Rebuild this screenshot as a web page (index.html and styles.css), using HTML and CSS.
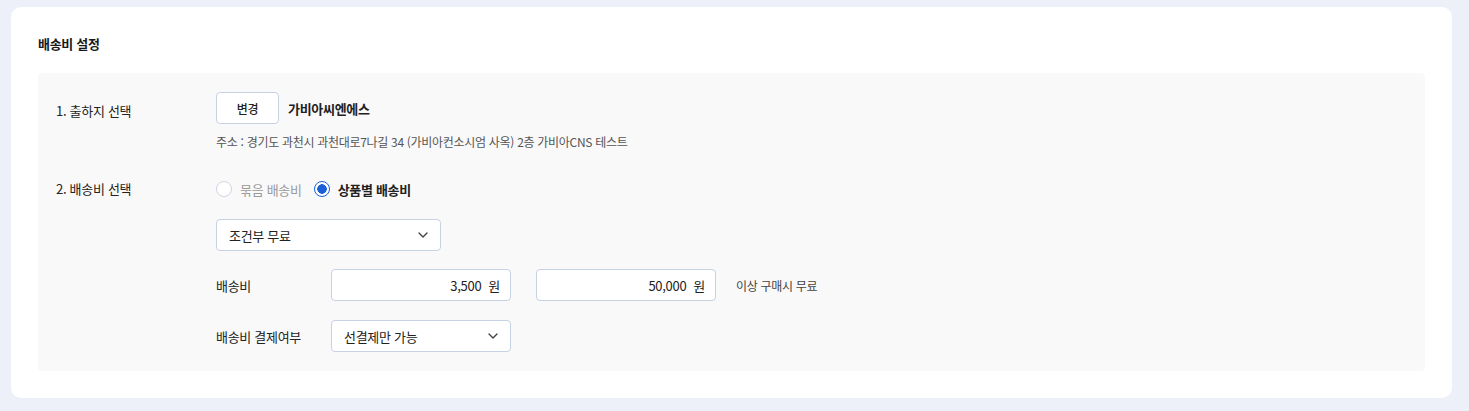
FILE: index.html
```html
<!DOCTYPE html>
<html lang="ko">
<head>
<meta charset="utf-8">
<title>배송비 설정</title>
<link rel="stylesheet" href="styles.css">
</head>
<body>
<div class="page">
  <section class="card">
    <h2 class="card-title">배송비 설정</h2>
    <div class="panel">
      <div class="row row-origin">
        <div class="row-label label-origin">1. 출하지 선택</div>
        <div class="row-body">
          <div class="origin-line">
            <button class="btn">변경</button>
            <span class="company">가비아씨엔에스</span>
          </div>
          <p class="address">주소 : 경기도 과천시 과천대로7나길 34 (가비아컨소시엄 사옥) 2층 가비아CNS 테스트</p>
        </div>
      </div>
      <div class="row row-fee">
        <div class="row-label">2. 배송비 선택</div>
        <div class="row-body">
          <div class="radios">
            <label class="radio radio-disabled"><span class="radio-dot"></span><span>묶음 배송비</span></label>
            <label class="radio radio-checked"><span class="radio-dot"></span><span>상품별 배송비</span></label>
          </div>
          <div class="select select-wide">
            <span>조건부 무료</span>
            <svg class="chev" width="10" height="6" viewBox="0 0 10 6"><path d="M1 1l4 4 4-4" fill="none" stroke="#444" stroke-width="1.4" stroke-linecap="round" stroke-linejoin="round"/></svg>
          </div>
          <div class="sub-row">
            <div class="sub-label">배송비</div>
            <div class="input"><span>3,500</span><span class="unit">원</span></div>
            <div class="input input-second"><span>50,000</span><span class="unit">원</span></div>
            <span class="note">이상 구매시 무료</span>
          </div>
          <div class="sub-row sub-row-last">
            <div class="sub-label">배송비 결제여부</div>
            <div class="select select-narrow">
              <span>선결제만 가능</span>
              <svg class="chev" width="10" height="6" viewBox="0 0 10 6"><path d="M1 1l4 4 4-4" fill="none" stroke="#444" stroke-width="1.4" stroke-linecap="round" stroke-linejoin="round"/></svg>
            </div>
          </div>
        </div>
      </div>
    </div>
  </section>
</div>
</body>
</html>
```
FILE: styles.css
```css
* { box-sizing: border-box; }
html, body { margin: 0; padding: 0; }
body {
  background: #edf0f8;
  font-family: "Noto Sans CJK KR", "Noto Sans", sans-serif;
  font-size: 13px;
  letter-spacing: -0.3px;
  color: #222;
}
.page { padding: 7px 17px 14px 11px; }
.card {
  background: #fff;
  border-radius: 10px;
  padding: 27px 27px 27px 27px;
}
.card-title {
  margin: 0 0 19px 0;
  font-size: 13px;
  font-weight: 700;
  line-height: 20px;
  color: #1a1a1a;
}
.panel {
  background: #f9f9f9;
  border-radius: 4px;
  padding: 19px 18px 19px 18px;
}
.row { display: flex; }
.row-fee { margin-top: 28px; }
.row-label {
  width: 160px;
  flex: none;
  line-height: 20px;
  color: #222;
}
.label-origin { padding-top: 9px; }
.row-body { flex: 1; }
.origin-line { display: flex; align-items: center; gap: 9px; }
.btn {
  width: 63px;
  height: 32px;
  background: #fff;
  border: 1px solid #c7d1e4;
  border-radius: 4px;
  font-family: inherit;
  font-size: 12px;
  letter-spacing: -0.3px;
  color: #222;
  padding: 0;
  font-weight: 500;
}
.company { font-weight: 700; font-size: 13px; color: #222; }
.address {
  margin: 9px 0 0 0;
  font-size: 12px;
  line-height: 18px;
  color: #555;
}
.radios { display: flex; align-items: center; gap: 12px; height: 20px; }
.radio { display: flex; align-items: center; gap: 8px; }
.radio-dot {
  width: 16px; height: 16px;
  border-radius: 50%;
  border: 1px solid #cdd4e2;
  background: #fff;
  flex: none;
}
.radio-disabled { color: #9a9a9a; }
.radio-checked { font-weight: 700; color: #222; }
.radio-checked .radio-dot {
  border: 1.5px solid #1b5fd9;
  background: radial-gradient(circle, #1b5fd9 0 4.5px, #fff 5px);
}
.select {
  display: flex;
  align-items: center;
  justify-content: space-between;
  height: 32px;
  background: #fff;
  border: 1px solid #c7d1e4;
  border-radius: 4px;
  padding: 0 12px 0 12px;
  color: #222;
}
.select-wide { width: 225px; margin-top: 20px; }
.select-narrow { width: 180px; }
.sub-row { display: flex; align-items: center; margin-top: 18px; }
.sub-row-last { margin-top: 19px; }
.sub-label { width: 115px; flex: none; }
.input {
  width: 180px;
  height: 32px;
  display: flex;
  align-items: center;
  justify-content: flex-end;
  gap: 7px;
  background: #fff;
  border: 1px solid #c7d1e4;
  border-radius: 4px;
  padding: 0 10px;
  color: #222;
}
.input-second { margin-left: 25px; }
.note { margin-left: 20px; font-size: 12px; color: #444; }
```
